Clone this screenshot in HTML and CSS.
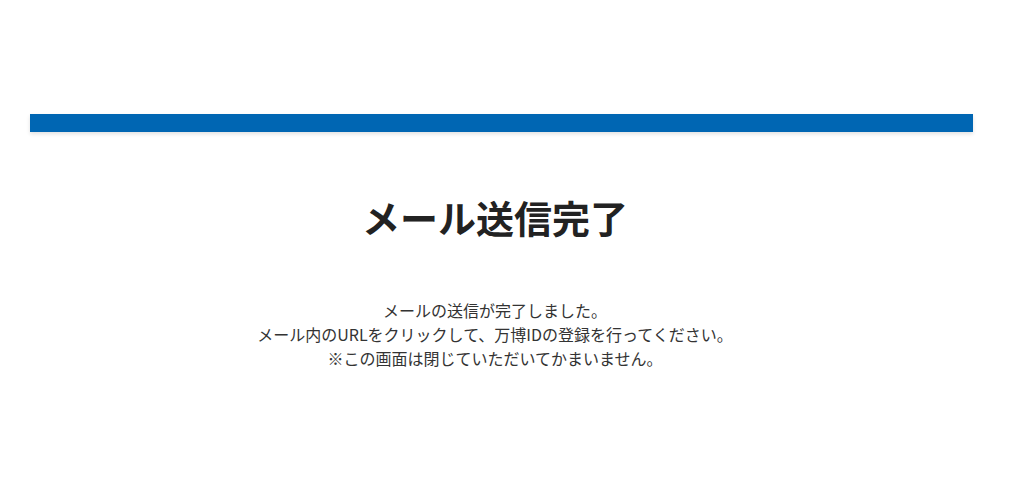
FILE: index.html
```html
<!DOCTYPE html>
<html lang="ja">
<head>
<meta charset="utf-8">
<title>メール送信完了</title>
<link rel="stylesheet" href="styles.css">
</head>
<body>
<div class="page">
  <header class="topbar"></header>
  <main class="content">
    <h1 class="title">メール送信完了</h1>
    <p class="message">メールの送信が完了しました。<br>メール内のURLをクリックして、万博IDの登録を行ってください。<br>※この画面は閉じていただいてかまいません。</p>
  </main>
</div>
</body>
</html>
```
FILE: styles.css
```css
html, body {
  margin: 0;
  padding: 0;
  background: #ffffff;
}
body {
  font-family: "Noto Sans CJK JP", "Noto Sans", sans-serif;
  color: #333333;
}
.page {
  width: 943px;
  margin-left: 30px;
  padding-top: 114px;
}
.topbar {
  height: 18px;
  background: #0066b3;
  box-shadow: 0 2px 4px rgba(0, 0, 0, 0.12);
}
.content {
  text-align: center;
  padding-top: 57px;
  padding-right: 13px;
}
.title {
  margin: 0;
  font-size: 38px;
  font-weight: 700;
  line-height: 56px;
  color: #222222;
}
.message {
  margin: 53px 0 0;
  font-size: 16px;
  line-height: 24px;
  color: #333333;
}
```
